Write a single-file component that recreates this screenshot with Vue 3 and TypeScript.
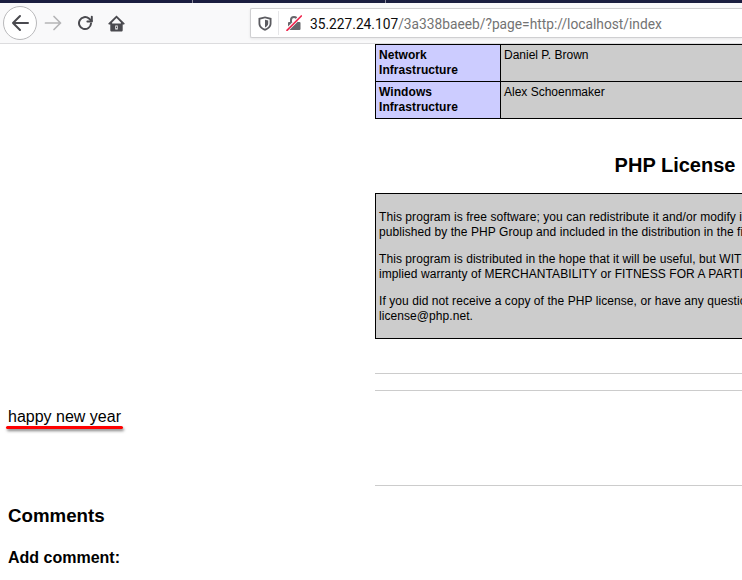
<script setup lang="ts">
const rows: { label: string; name: string }[] = [
  { label: 'Network Infrastructure', name: 'Daniel P. Brown' },
  { label: 'Windows Infrastructure', name: 'Alex Schoenmaker' },
]
</script>

<template>
  <div class="window">
    <div class="tabstrip">
      <i class="tabsep"></i><i class="tabsep"></i><i class="tabsep"></i>
    </div>
    <header class="toolbar">
      <button class="back" aria-label="Back">
        <svg width="20" height="20" viewBox="0 0 20 20" fill="none" stroke="#4a4a4f" stroke-width="2" stroke-linecap="round" stroke-linejoin="round"><path d="M3 10h15M10 3l-7 7 7 7" /></svg>
      </button>
      <svg class="forward" width="18" height="18" viewBox="0 0 18 18" fill="none" stroke="#b5b5b7" stroke-width="1.7" stroke-linecap="round" stroke-linejoin="round"><path d="M1.500 9h15M10 2.500 16.500 9 10 15.500" /></svg>
      <svg class="reload" width="16" height="16" viewBox="0 0 16 16" fill="none" stroke="#4a4a4f" stroke-width="2" stroke-linecap="round" stroke-linejoin="round"><path d="M14 8.500A6 6 0 1 1 12 3.600L14.600 6" /><path d="M14.800 1.800V6.400H10.400" /></svg>
      <svg class="home" width="17" height="17" viewBox="0 0 17 17"><path fill="#4a4a4f" d="M8.500.4.500 8.200c-.4.500-.1 1.200.6 1.200H2.300v5.800c0 .8.600 1.400 1.400 1.400h9.600c.8 0 1.400-.6 1.400-1.400V9.400h1.200c.7 0 1-.7.600-1.200Z" /><path fill="#f9f9fa" d="M8.500 3.100 12.900 7.400v1.100H4.100V7.400ZM7.300 10.600h2.400v3.800H7.300Z" /><path fill="#4a4a4f" d="M8 11.600h1v1.600H8Z" /></svg>
      <div class="urlbar">
        <svg class="shield" width="14" height="15" viewBox="0 0 14 15"><path fill="#5b5b60" fill-rule="evenodd" d="M7 .5 13.500 2v5.500c0 3.500-3 6-6.500 7.200C3.500 13.500.5 11 .5 7.500V2ZM7 2.300 2.300 3.400v4c0 2.500 2.100 4.400 4.700 5.400 2.600-1 4.700-2.900 4.700-5.400v-4Zm0 1.500 3.200.7v3c0 1.700-1.400 3-3.200 3.900Z" /></svg>
        <i class="urlsep"></i>
        <svg class="lock" width="16" height="16" viewBox="0 0 16 16"><path fill="#66666b" d="M3 7h1V5a4 4 0 0 1 8 0v2h1.500a1 1 0 0 1 1 1v6a1 1 0 0 1-1 1H3a1 1 0 0 1-1-1V8a1 1 0 0 1 1-1Zm3 0h4V5a2 2 0 0 0-4 0Z" /><path d="M1 15 15 1" stroke="#fff" stroke-width="3.400" /><path d="M1 15.300 15.300 1" stroke="#f0274f" stroke-width="1.700" stroke-linecap="round" /></svg>
        <span class="url"><span class="host">35.227.24.107</span>/3a338baeeb/?page=http://localhost/index</span>
      </div>
    </header>

    <main class="page">
      <div class="columns">
        <div class="left">
          <p class="message">happy new year<i class="mark"></i></p>
        </div>
        <div class="right">
          <div class="inner">
            <table class="credits">
              <tbody>
                <tr v-for="row in rows" :key="row.name">
                  <td class="label">{{ row.label }}</td>
                  <td class="value">{{ row.name }}</td>
                </tr>
              </tbody>
            </table>
            <h2 class="license-title">PHP License</h2>
            <div class="license">
              <p>This program is free software; you can redistribute it and/or modify it under the terms of the PHP License as published by the PHP Group and included in the distribution in the file: LICENSE</p>
              <p>This program is distributed in the hope that it will be useful, but WITHOUT ANY WARRANTY; without even the implied warranty of MERCHANTABILITY or FITNESS FOR A PARTICULAR PURPOSE.</p>
              <p>If you did not receive a copy of the PHP license, or have any questions about PHP licensing, please contact license@php.net.</p>
            </div>
            <hr class="rule first" />
            <hr class="rule second" />
            <hr class="rule third" />
          </div>
        </div>
      </div>
      <section class="comments">
        <h2>Comments</h2>
        <h3>Add comment:</h3>
      </section>
    </main>
  </div>
</template>

<style>
html, body { margin: 0; background: #fff; overflow: hidden; }
</style>

<style scoped>
.window {
  width: 742px;
  height: 580px;
  overflow: hidden;
  display: flex;
  flex-direction: column;
  font-family: "Liberation Sans", Arial, sans-serif;
  color: #000;
}
.tabstrip {
  height: 3px;
  flex: none;
  background: #1b1e40;
  display: flex;
  padding-left: 192px;
  gap: 191.500px;
}
.tabsep { width: 1px; background: #8a8a9a; }
.tabstrip .tabsep:nth-child(3) { display: none; }
.toolbar {
  height: 40px;
  flex: none;
  background: #f9f9fa;
  border-bottom: 1px solid #dcdcde;
  display: flex;
  align-items: center;
  padding-left: 3px;
}
.back {
  width: 34px;
  height: 34px;
  box-sizing: border-box;
  padding: 0;
  flex: none;
  border: 1px solid #b9b9bb;
  border-radius: 50%;
  background: #fff;
  display: flex;
  align-items: center;
  justify-content: center;
}
.forward { margin-left: 7px; flex: none; }
.reload { margin-left: 15px; flex: none; }
.home { margin-left: 15px; flex: none; }
.urlbar {
  margin-left: 125px;
  flex: 1;
  height: 30px;
  box-sizing: border-box;
  background: #fff;
  border: 1px solid #cfcfd1;
  border-right: 0;
  border-radius: 2px 0 0 2px;
  box-shadow: 0 1px 3px rgba(0, 0, 0, 0.08);
  display: flex;
  align-items: center;
  padding-left: 7px;
}
.shield { flex: none; }
.urlsep { width: 1px; height: 24px; background: #e6e6e8; margin-left: 6px; flex: none; }
.lock { margin-left: 7px; flex: none; }
.url {
  margin-left: 8px;
  padding-top: 1px;
  font-family: Roboto, "Noto Sans", sans-serif;
  font-size: 13.750px;
  color: #737373;
  white-space: nowrap;
}
.host { color: #0c0c0d; }
.page { flex: 1; min-height: 0; overflow: hidden; }
.columns { display: flex; }
.left { width: 375px; flex: none; display: flex; align-items: flex-end; }
.message {
  position: relative;
  margin: 0 0 60px 8px;
  font-size: 16px;
  line-height: 18px;
}
.mark {
  position: absolute;
  left: -2px;
  right: -2px;
  bottom: -3px;
  height: 3px;
  border-radius: 2px;
  background: #ff0000;
  box-shadow: 1px 2px 3px rgba(0, 0, 0, 0.5);
}
.right { flex: 1; min-width: 0; overflow: hidden; }
.inner { width: 600px; font-size: 12px; line-height: 15px; letter-spacing: 0.07px; }
.credits { width: 600px; border-collapse: collapse; table-layout: fixed; }
.credits td {
  border: 1px solid #000;
  vertical-align: top;
  padding: 3px;
  height: 30px;
}
.label { width: 118px; background: #ccccff; font-weight: bold; }
.value { background: #cccccc; letter-spacing: 0; }
.license-title {
  margin: 32px 0 0;
  font-size: 20px;
  line-height: 28px;
  letter-spacing: 0;
  text-align: center;
}
.license {
  margin-top: 14px;
  box-sizing: border-box;
  height: 146px;
  border: 1px solid #000;
  background: #ccc;
  padding: 16px 3px 0;
}
.license p { margin: 0 0 12px; }
.rule { border: 0; height: 1px; background: #ccc; margin: 0; }
.first { margin-top: 34px; }
.second { margin-top: 16px; }
.third { margin-top: 94px; }
.comments { padding-left: 8px; }
.comments h2 { margin: 18px 0 0; font-size: 18.720px; line-height: 24px; }
.comments h3 { margin: 21px 0 0; font-size: 16px; line-height: 18px; }
</style>
